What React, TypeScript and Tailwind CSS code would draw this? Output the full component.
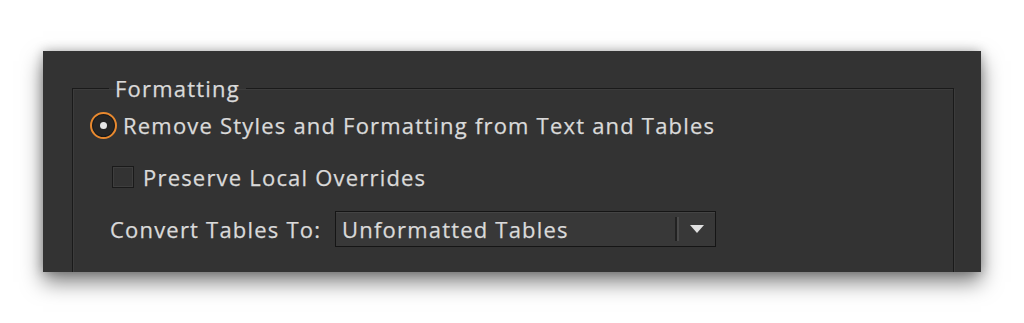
import React from "react";

export default function App() {
  const font = { fontFamily: '"Open Sans", "Noto Sans", sans-serif' };
  const txt = "text-[22px] tracking-[1.2px] text-[#dadada] leading-[26px] [-webkit-text-stroke:0.25px_#dadada]";
  return (
    <div className="w-[1024px] h-[323px] bg-white overflow-hidden" style={font}>
      <div className="ml-[43px] mt-[51px] w-[938px] h-[221px] bg-[#333333] overflow-hidden shadow-[0_10px_20px_rgba(0,0,0,0.5),0_0_10px_rgba(0,0,0,0.25)]">
        <fieldset className="ml-[29px] mt-[24px] w-[882px] h-[240px] border border-[#1a1a1a] shadow-[inset_1px_1px_0_#3c3c3c,1px_1px_0_#3c3c3c] pl-[17px]">
          <legend className={`ml-[19px] px-[6px] ${txt}`}>Formatting</legend>
          <div className="flex items-center h-[26px] mt-[11px]">
            <div className="w-[27px] h-[27px] rounded-full border-2 border-[#e8892f] bg-[#262626] flex items-center justify-center shadow-[inset_0_0_0_1px_#1a1a1a]">
              <div className="w-[7px] h-[7px] rounded-full bg-[#e6e6e6]" />
            </div>
            <span className={`ml-[6px] ${txt}`}>
              Remove Styles and Formatting from Text and Tables
            </span>
          </div>
          <div className="flex items-center h-[22px] mt-[28px] ml-[22px]">
            <div className="w-[22px] h-[22px] border border-[#1a1a1a] bg-[#333333] shadow-[inset_0_0_0_1px_#3e3e3e]" />
            <span className={`ml-[9px] ${txt}`}>Preserve Local Overrides</span>
          </div>
          <div className="flex items-center h-[36px] mt-[23px] ml-[20px]">
            <span className={`${txt} w-[225px]`}>Convert Tables To:</span>
            <div className="w-[381px] h-[36px] border border-[#151515] bg-[#383838] shadow-[inset_0_1px_0_#444444] flex items-center pl-[6px]">
              <span className={`flex-1 ${txt}`}>Unformatted Tables</span>
              <div className="flex h-[24px]">
                <div className="w-[2px] bg-[#222222]" />
                <div className="w-[2px] bg-[#4a4a4a]" />
              </div>
              <div className="w-[36px] flex items-center justify-center">
                <svg width="14" height="8" viewBox="0 0 14 8">
                  <path d="M0 0 H14 L7 8 Z" fill="#e0e0e0" />
                </svg>
              </div>
            </div>
          </div>
        </fieldset>
      </div>
    </div>
  );
}
